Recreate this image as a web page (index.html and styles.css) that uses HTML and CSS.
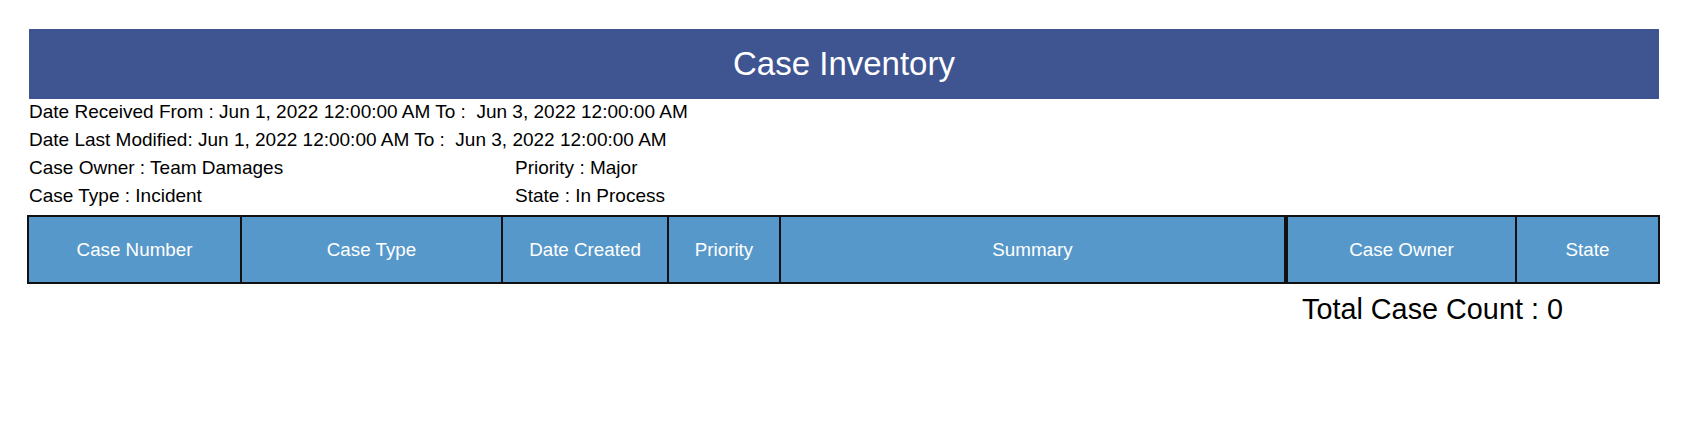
FILE: index.html
```html
<!DOCTYPE html>
<html lang="en">
<head>
<meta charset="utf-8">
<title>Case Inventory</title>
<link rel="stylesheet" href="styles.css">
</head>
<body>
<div class="report">
  <div class="title-bar">Case Inventory</div>
  <div class="meta">
    <div class="meta-line">Date Received From : Jun 1, 2022 12:00:00 AM To :&nbsp; Jun 3, 2022 12:00:00 AM</div>
    <div class="meta-line">Date Last Modified: Jun 1, 2022 12:00:00 AM To :&nbsp; Jun 3, 2022 12:00:00 AM</div>
    <div class="meta-grid">
      <div class="meta-line">Case Owner : Team Damages</div>
      <div class="meta-line">Priority : Major</div>
      <div class="meta-line">Case Type : Incident</div>
      <div class="meta-line">State : In Process</div>
    </div>
  </div>
  <table class="cases">
    <colgroup>
      <col class="c-num"><col class="c-type"><col class="c-date"><col class="c-pri"><col class="c-sum"><col class="c-own"><col class="c-state">
    </colgroup>
    <thead>
      <tr>
        <th>Case Number</th>
        <th>Case Type</th>
        <th>Date Created</th>
        <th>Priority</th>
        <th class="sum">Summary</th>
        <th class="own">Case Owner</th>
        <th>State</th>
      </tr>
    </thead>
  </table>
  <div class="total-row">
    <div class="total">Total Case Count : 0</div>
  </div>
</div>
</body>
</html>
```
FILE: styles.css
```css
html, body {
  margin: 0;
  padding: 0;
  background: #ffffff;
}
body {
  font-family: "Liberation Sans", Arial, Helvetica, sans-serif;
  color: #000;
}
.report {
  padding: 29px 29px 0 29px;
}
.title-bar {
  height: 70px;
  background: #3f5592;
  color: #ffffff;
  font-size: 33px;
  line-height: 70px;
  text-align: center;
}
.meta {
  margin-top: -1px;
  font-size: 19px;
  line-height: 28px;
}
.meta-line {
  white-space: pre;
}
.meta-grid {
  display: grid;
  grid-template-columns: 486px 1fr;
}
.cases {
  margin-top: 5px;
  margin-left: -2px;
  width: 1633px;
  border-collapse: collapse;
  table-layout: fixed;
}
.cases th {
  height: 65px;
  padding: 0;
  background: #5698ca;
  color: #ffffff;
  font-weight: normal;
  font-size: 18.8px;
  text-align: center;
  vertical-align: middle;
  border: 2px solid #111111;
}
.cases th.sum {
  border-right: 4px solid #111111;
}
.c-num { width: 213px; }
.c-type { width: 261px; }
.c-date { width: 166px; }
.c-pri { width: 112px; }
.c-sum { width: 506px; }
.c-own { width: 230px; }
.c-state { width: 143px; }
.total-row {
  display: flex;
  padding-left: 1273px;
  padding-top: 9px;
}
.total {
  font-size: 28.8px;
  line-height: 32px;
}
```
